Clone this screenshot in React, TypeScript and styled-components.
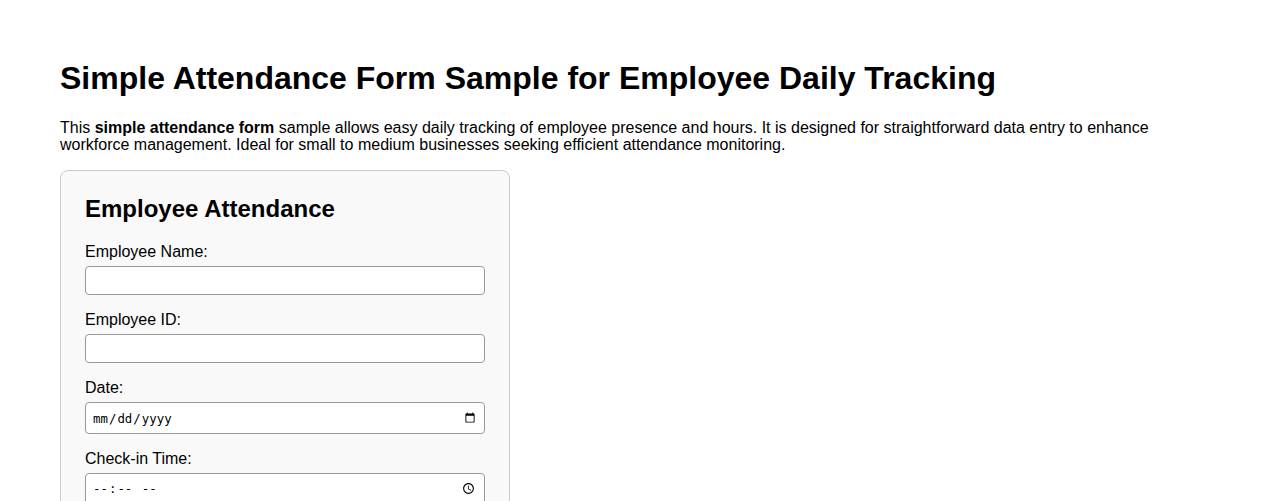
import React from "react";
import styled, { createGlobalStyle } from "styled-components";

const Global = createGlobalStyle`
  html, body { margin: 0; padding: 0; background: #ffffff; }
  body { font-family: "Liberation Sans", Arial, sans-serif; color: #000; }
  * { box-sizing: border-box; }
`;

const Page = styled.main`
  padding: 39px 60px 40px 60px;
`;

const Title = styled.h1`
  font-size: 32px;
  font-weight: bold;
  margin: 21px 0 22px 0;
`;

const Intro = styled.p`
  font-size: 16px;
  margin: 0 0 17px 0;
  line-height: 17px;
`;

const Card = styled.form`
  width: 450px;
  background: #f9f9f9;
  border: 1px solid #cccccc;
  border-radius: 8px;
  padding: 24px;
`;

const CardTitle = styled.h2`
  font-size: 24px;
  font-weight: bold;
  margin: 0 0 20px 0;
`;

const Field = styled.div`
  display: flex;
  flex-direction: column;
  margin-bottom: 16px;
`;

const Label = styled.label`
  font-size: 16px;
  margin-bottom: 5px;
`;

const TextInput = styled.input<{ $tall?: boolean }>`
  display: block;
  width: 100%;
  height: ${(p) => (p.$tall ? "32px" : "29px")};
  border: 1px solid #999999;
  border-radius: 4px;
  background: #ffffff;
  padding: 0 6px;
  font-size: ${(p) => (p.$tall ? "12.4px" : "13.33px")};
  font-family: ${(p) => (p.$tall ? "\"DejaVu Sans Mono\", monospace" : "\"Liberation Sans\", Arial, sans-serif")};
  color: #000;
`;

export default function App() {
  return (
    <>
      <Global />
      <Page>
        <Title>Simple Attendance Form Sample for Employee Daily Tracking</Title>
        <Intro>
          This <strong>simple attendance form</strong> sample allows easy daily tracking of employee presence and hours. It is designed for straightforward data entry to enhance workforce management. Ideal for small to medium businesses seeking efficient attendance monitoring.
        </Intro>
        <Card onSubmit={(e) => e.preventDefault()}>
          <CardTitle>Employee Attendance</CardTitle>
          <Field>
            <Label htmlFor="name">Employee Name:</Label>
            <TextInput id="name" type="text" />
          </Field>
          <Field>
            <Label htmlFor="eid">Employee ID:</Label>
            <TextInput id="eid" type="text" />
          </Field>
          <Field>
            <Label htmlFor="date">Date:</Label>
            <TextInput id="date" type="date" $tall />
          </Field>
          <Field>
            <Label htmlFor="checkin">Check-in Time:</Label>
            <TextInput id="checkin" type="time" $tall />
          </Field>
          <Field>
            <Label htmlFor="checkout">Check-out Time:</Label>
            <TextInput id="checkout" type="time" $tall />
          </Field>
        </Card>
      </Page>
    </>
  );
}
